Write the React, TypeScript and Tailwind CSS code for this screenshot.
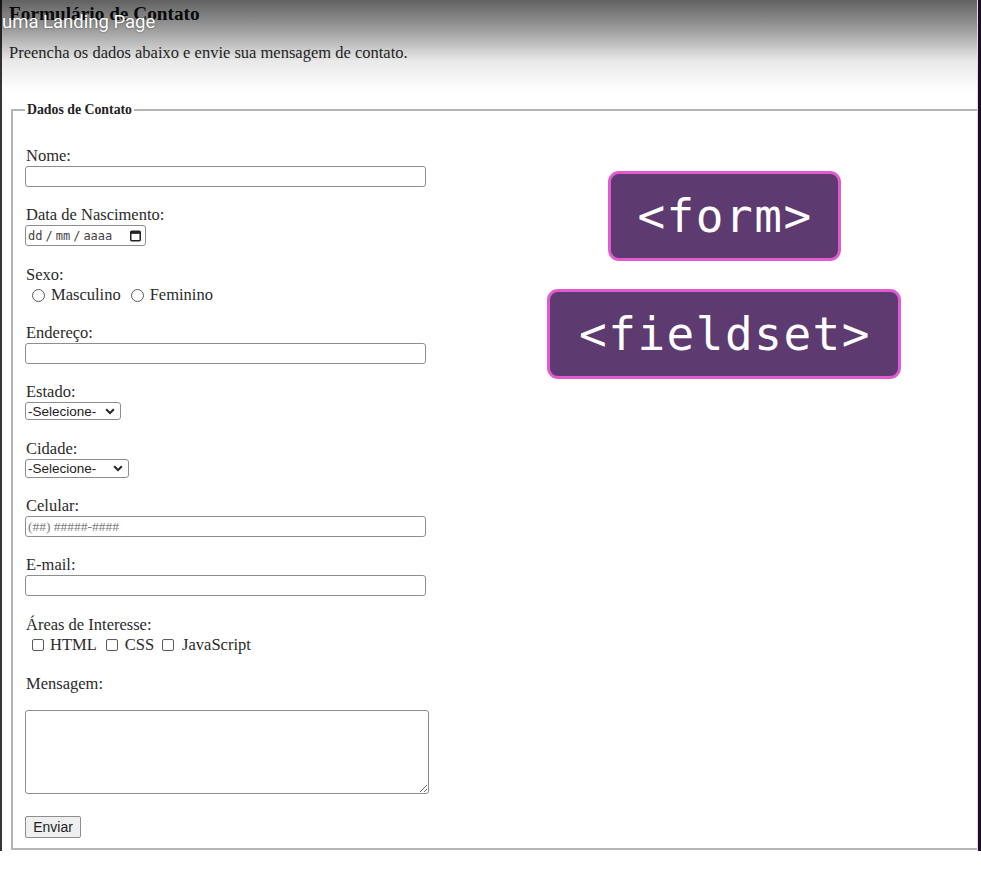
import React from "react";

const serif = { fontFamily: '"Liberation Serif", "Times New Roman", serif' };

function Label({ children }: { children: React.ReactNode }) {
  return (
    <div className="h-[20px] pl-[1px] text-[16.5px] leading-[20px] text-[#2a2a2a]">
      {children}
    </div>
  );
}

function TextInput({ placeholder }: { placeholder?: string }) {
  return (
    <input
      type="text"
      placeholder={placeholder}
      className="block h-[21px] w-[401px] rounded-[3px] border border-[#8d8d8d] bg-white px-[2px] text-[13.5px] text-[#222] outline-none placeholder:text-[#7a7a7a]"
      style={serif}
    />
  );
}

function FakeSelect({ width, height }: { width: string; height: string }) {
  return (
    <div
      className={`flex items-center justify-between rounded-[3px] border border-[#8d8d8d] bg-white pl-[2px] pr-[5px] ${width} ${height}`}
    >
      <span
        className="text-[13.5px] leading-[17px] text-[#222]"
        style={{ fontFamily: '"Liberation Sans", Arial, sans-serif' }}
      >
        -Selecione-
      </span>
      <svg width="10" height="7" viewBox="0 0 10 7">
        <path d="M1.2 1.3 L5 5.1 L8.8 1.3" fill="none" stroke="#222" strokeWidth="2" />
      </svg>
    </div>
  );
}

function Radio({ label, ml }: { label: string; ml: string }) {
  return (
    <span className={`flex items-center ${ml}`}>
      <span className="inline-block h-[13px] w-[13px] rounded-full border border-[#5a5a5a] bg-white" />
      <span className="ml-[6px]">{label}</span>
    </span>
  );
}

function Check({ label, ml, gap }: { label: string; ml: string; gap: string }) {
  return (
    <span className={`flex items-center ${ml}`}>
      <span className="inline-block h-[12px] w-[12px] rounded-[2px] border border-[#5a5a5a] bg-white" />
      <span className={gap}>{label}</span>
    </span>
  );
}

export default function App() {
  return (
    <div className="relative h-[877px] w-[981px] overflow-hidden bg-white" style={serif}>
      <div className="flex">
        <div className="w-[977px] overflow-hidden border-l-2 border-[#353535] pb-[1px] pl-[7px] pt-[3px]">
          <h3 className="h-[22px] text-[19.3px] font-bold leading-[22px] text-[#111]">
            Formulário de Contato
          </h3>
          <p className="mt-[19px] h-[18px] text-[16.5px] leading-[18px] text-[#2a2a2a]">
            Preencha os dados abaixo e envie sua mensagem de contato.
          </p>
          <fieldset className="ml-[2px] mr-[-10px] mt-[40px] border-2 border-[#b5b5b5] pb-[10px] pl-[12px] pr-[12px]">
            <legend className="px-[2px] text-[13.8px] font-bold leading-[16px] text-[#222]">
              Dados de Contato
            </legend>

            <div className="mt-[28px] mb-[18px]">
              <Label>Nome:</Label>
              <TextInput />
            </div>

            <div className="mb-[19px]">
              <Label>Data de Nascimento:</Label>
              <div className="flex h-[21px] w-[121px] items-center justify-between rounded-[3px] border border-[#8d8d8d] bg-white pl-[2px] pr-[4px]">
                <span
                  className="flex gap-[3px] text-[12px] leading-[14px] text-[#444]"
                  style={{ fontFamily: '"DejaVu Sans Mono", monospace' }}
                >
                  <span>dd</span>
                  <span>/</span>
                  <span>mm</span>
                  <span>/</span>
                  <span>aaaa</span>
                </span>
                <svg width="11" height="12" viewBox="0 0 11 12">
                  <rect x="0.75" y="1.25" width="9.5" height="9.5" rx="1" fill="none" stroke="#222" strokeWidth="1.5" />
                  <rect x="0.75" y="1.25" width="9.5" height="2.6" fill="#222" />
                </svg>
              </div>
            </div>

            <div className="mb-[18px]">
              <Label>Sexo:</Label>
              <div className="flex h-[20px] items-center text-[16.5px] leading-[20px] text-[#2a2a2a]">
                <Radio label="Masculino" ml="ml-[7px]" />
                <Radio label="Feminino" ml="ml-[10px]" />
              </div>
            </div>

            <div className="mb-[18px]">
              <Label>Endereço:</Label>
              <TextInput />
            </div>

            <div className="mb-[19px]">
              <Label>Estado:</Label>
              <FakeSelect width="w-[96px]" height="h-[18px]" />
            </div>

            <div className="mb-[18px]">
              <Label>Cidade:</Label>
              <FakeSelect width="w-[104px]" height="h-[19px]" />
            </div>

            <div className="mb-[18px]">
              <Label>Celular:</Label>
              <TextInput placeholder="(##) #####-####" />
            </div>

            <div className="mb-[19px]">
              <Label>E-mail:</Label>
              <TextInput />
            </div>

            <div className="mb-[19px]">
              <Label>Áreas de Interesse:</Label>
              <div className="flex h-[20px] items-center text-[16.5px] leading-[20px] text-[#2a2a2a]">
                <Check label="HTML" ml="ml-[7px]" gap="ml-[6px]" />
                <Check label="CSS" ml="ml-[9px]" gap="ml-[7px]" />
                <Check label="JavaScript" ml="ml-[8px]" gap="ml-[8px]" />
              </div>
            </div>

            <div>
              <Label>Mensagem:</Label>
              <textarea className="mt-[16px] block h-[84px] w-[404px] rounded-[3px] border border-[#8d8d8d] bg-white outline-none" />
            </div>

            <button
              type="button"
              className="mt-[22px] block h-[22px] w-[56px] rounded-[2px] border border-[#8d8d8d] bg-[#efefef] text-[14px] leading-[20px] text-[#222]"
              style={{ fontFamily: '"Liberation Sans", Arial, sans-serif' }}
            >
              Enviar
            </button>
          </fieldset>
        </div>
        <div className="flex w-[4px]">
          <div className="w-[1px] bg-[#e6d8ec]" />
          <div className="w-[3px] bg-[#1c0c26]" />
        </div>
      </div>

      {/* video overlay gradient */}
      <div className="pointer-events-none absolute left-0 top-0 h-[92px] w-[977px] bg-[linear-gradient(to_bottom,rgba(0,0,0,0.62),rgba(0,0,0,0.38)_33%,rgba(0,0,0,0.09)_66%,rgba(0,0,0,0))]" />
      <div
        className="absolute left-[2px] top-[11px] text-[18.5px] leading-[22px] text-white [text-shadow:0_0_2px_rgba(0,0,0,0.5)]"
        style={{ fontFamily: 'Roboto, "Liberation Sans", sans-serif' }}
      >
        uma Landing Page
      </div>

      {/* tag badges */}
      <div className="absolute left-[547px] top-[171px] flex w-[354px] flex-col items-center gap-[28px]">
        <div
          className="flex h-[90px] w-[233px] items-center justify-center rounded-[11px] border-[3px] border-[#e25ad0] bg-[#5d3a6f] pl-[2px] text-[46px] tracking-[1.5px] text-white"
          style={{ fontFamily: '"DejaVu Sans Mono", monospace' }}
        >
          &lt;form&gt;
        </div>
        <div
          className="flex h-[90px] w-[354px] items-center justify-center rounded-[11px] border-[3px] border-[#e25ad0] bg-[#5d3a6f] pl-[2px] text-[46px] tracking-[1.5px] text-white"
          style={{ fontFamily: '"DejaVu Sans Mono", monospace' }}
        >
          &lt;fieldset&gt;
        </div>
      </div>
    </div>
  );
}
